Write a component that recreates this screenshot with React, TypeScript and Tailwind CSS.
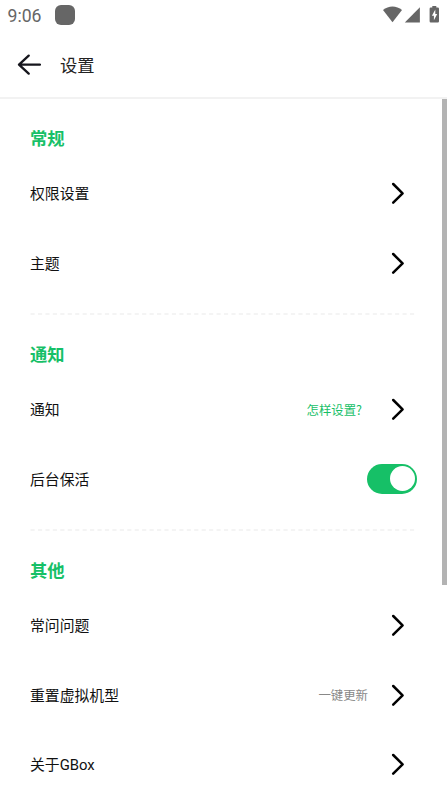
import * as React from "react";

type RowProps = {
  label: string;
  children?: React.ReactNode;
};

const Chevron: React.FC = () => (
  <svg className="w-5 h-6 mr-2.5 mb-px" viewBox="0 0 20 24" fill="none">
    <path
      d="M6.2 3L15.6 12.3L6.2 21.6"
      stroke="#000"
      strokeWidth="2.5"
      strokeLinecap="round"
      strokeLinejoin="round"
    />
  </svg>
);

const Row: React.FC<RowProps> = ({ label, children }) => (
  <div className="h-[69.5px] flex items-center justify-between">
    <span className="pt-px text-[14.85px] text-[#111]">{label}</span>
    <div className="flex items-center">{children || <Chevron />}</div>
  </div>
);

const Section: React.FC<{ title: string; children: React.ReactNode }> = ({
  title,
  children,
}) => (
  <section className="pt-5">
    <h2 className="h-10 pt-[2px] flex items-center text-[17.3px] font-bold text-[#16c067]">
      {title}
    </h2>
    {children}
  </section>
);

const Divider: React.FC = () => (
  <svg className="block w-[385px] h-[2px] mt-[14.5px] mb-[0.5px]">
    <line
      x1="0.5"
      y1="1"
      x2="385"
      y2="1"
      stroke="#f1f1f1"
      strokeWidth="1.7"
      strokeDasharray="4.2 3.24"
    />
  </svg>
);

const StatusBar: React.FC = () => (
  <div className="h-[30px] flex items-center pl-[7.5px] pr-[7px]">
    <span className="w-[47.5px] pt-[2px] text-[17.6px] text-[#666] font-[Roboto]">
      9:06
    </span>
    <span className="w-5 h-5 rounded-[6px] bg-[#666]" />
    <svg
      className="ml-auto w-[58px] h-[18px]"
      viewBox="0 0 58 18"
      fill="#666"
    >
      <path d="M1 4.1C6.5-.8 14.5-.8 20 4.1L10.5 16.2Z" />
      <path d="M37.9 1.2V16.4H22.8Z" />
      <path d="M50.3 0h4v1.5h1.5q1.2 0 1.2 1.2v12.5q0 1.2-1.2 1.2h-7q-1.2 0-1.2-1.2V2.7q0-1.2 1.2-1.2h1.5z" />
      <path d="M53.3 3.6L49.9 9.7h2v4.6l3.3-6.3h-1.9z" fill="#fff" />
    </svg>
  </div>
);

const App: React.FC = () => {
  return (
    <div className="relative h-[794px] overflow-hidden bg-white font-['Roboto','Noto_Sans_CJK_SC',sans-serif]">
      <StatusBar />
      <header className="h-[69px] flex items-center border-b-2 border-[#f2f2f2] pl-[17px]">
        <svg className="w-6 h-6 mt-[3px]" viewBox="0 0 24 24" fill="none">
          <path
            d="M11.7 2.6L2 11.6L11.7 20.6M2 11.6H23"
            stroke="#16161d"
            strokeWidth="2.3"
            strokeLinecap="round"
            strokeLinejoin="round"
          />
        </svg>
        <h1 className="ml-[19px] pt-[6px] text-[17.3px] text-[#222]">设置</h1>
      </header>

      <main className="pl-[30px] pr-[30px]">
        <Section title="常规">
          <Row label="权限设置" />
          <Row label="主题" />
          <Divider />
        </Section>
        <Section title="通知">
          <Row label="通知">
            <span className="pt-[2px] text-[12.4px] text-[#16c067] mr-[25px] font-['Noto_Sans_CJK_SC',sans-serif]">
              怎样设置?
            </span>
            <Chevron />
          </Row>
          <Row label="后台保活">
            <div className="w-[50px] h-[30px] rounded-full bg-[#16c067] flex items-center justify-end pr-[2px] pb-[1px]">
              <div className="w-[25px] h-[25px] rounded-full bg-white" />
            </div>
          </Row>
          <Divider />
        </Section>
        <Section title="其他">
          <Row label="常问问题" />
          <Row label="重置虚拟机型">
            <span className="pt-[2px] text-[12.4px] text-[#888] mr-[19px]">
              一键更新
            </span>
            <Chevron />
          </Row>
          <Row label="关于GBox" />
        </Section>
      </main>

      {/* scroll thumb */}
      <div className="absolute right-0 top-[99px] w-[5px] h-[486px] bg-[#b3b3b3]" />
    </div>
  );
};

export default App;
